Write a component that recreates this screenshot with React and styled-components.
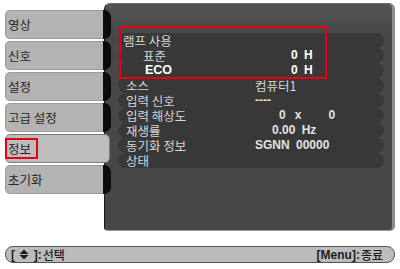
import React from 'react';
import styled, { createGlobalStyle } from 'styled-components';

const GlobalStyle = createGlobalStyle`
  html, body {
    margin: 0;
    padding: 0;
    background: #ffffff;
  }
  body {
    font-family: "Noto Sans CJK KR", "Liberation Sans", sans-serif;
  }
`;

const Page = styled.div`
  width: 400px;
  height: 269px;
  box-sizing: border-box;
  padding: 3px 5px 0 5px;
  display: flex;
  flex-direction: column;
`;

const Main = styled.div`
  display: flex;
  height: 228px;
`;

const TabColumn = styled.div`
  width: 106px;
  flex-shrink: 0;
  display: flex;
  flex-direction: column;
  gap: 2px;
  padding-top: 7px;
  position: relative;
  z-index: 1;
`;

const Tab = styled.div`
  height: 29px;
  display: flex;
  width: ${p => (p.$active ? '105px' : '106px')};
`;

const TabFace = styled.div`
  flex: 1;
  box-sizing: border-box;
  display: flex;
  align-items: center;
  padding-left: ${p => (p.$active ? '0' : '2px')};
  background: ${p => (p.$active ? '#bdbdbd' : '#b3b3b3')};
  border: 1px solid ${p => (p.$active ? '#7a7a7a' : '#9c9c9c')};
  border-right: ${p => (p.$active ? '1px solid #7a7a7a' : 'none')};
  border-radius: ${p => (p.$active ? '5px' : '5px 0 0 5px')};
  font-size: 12.5px;
  line-height: 15px;
  color: #262626;
`;

const TabEnd = styled.div`
  width: 8px;
  background: #0c0c0c;
  border-radius: 0 7px 7px 0;
`;

const Marked = styled.span`
  display: inline-block;
  margin-left: -1px;
  border: 2px solid #e60012;
  padding: 1px 5px 1px 1px;
`;

const Panel = styled.div`
  flex: 1;
  margin-left: -7px;
  box-sizing: border-box;
  padding: 29px 8px 0 13px;
  background: linear-gradient(#545454 0px, #484848 30px, #474747 100%);
  border-left: 1px solid #1a1a1a;
  border-right: 3px solid #8c8c8c;
  border-bottom: 1px solid #9a9a9a;
  border-top: 1px solid #6a6a6a;
  border-radius: 6px 6px 5px 4px;
`;

const InfoList = styled.div`
  display: flex;
  flex-direction: column;
`;

const Group = styled.div`
  position: relative;
  display: flex;
  flex-direction: column;
`;

const RedBox = styled.div`
  position: absolute;
  left: 1px;
  top: -7px;
  width: 208px;
  bottom: -1px;
  box-sizing: border-box;
  border: 2px solid #e60012;
  pointer-events: none;
`;

const Row = styled.div`
  height: 15px;
  display: grid;
  grid-template-columns: 137px 1fr;
  align-items: center;
  background: #383838;
  border-radius: 7.5px;
`;

const Label = styled.span`
  padding-left: ${p => p.$pad}px;
  font-size: ${p => (p.$latin ? '12.5px' : '12.5px')};
  font-family: ${p => (p.$latin ? '"Liberation Sans", sans-serif' : '"Noto Sans CJK KR", sans-serif')};
  font-weight: ${p => (p.$latin ? 700 : 400)};
  color: ${p => (p.$latin ? '#ffffff' : '#d6d6d6')};
  line-height: 15px;
  white-space: pre;
`;

const Value = styled.span`
  display: flex;
  padding-left: ${p => p.$indent || 0}px;
  font-family: "Liberation Sans", "Noto Sans CJK KR", sans-serif;
  font-weight: 700;
  font-size: 12px;
  color: ${p => (p.$bright ? '#ffffff' : '#e2e2e2')};
  line-height: 15px;
  white-space: pre;
  word-spacing: 3px;
`;

const Korean = styled.span`
  font-family: "Noto Sans CJK KR", sans-serif;
  font-weight: 400;
  font-size: 12.5px;
  color: #d6d6d6;
`;

const Gap = styled.span`
  margin-left: ${p => p.$w}px;
`;

const BottomBar = styled.div`
  margin-top: 15px;
  height: 17px;
  box-sizing: border-box;
  display: flex;
  justify-content: space-between;
  align-items: center;
  padding: 0 11px 0 5px;
  background: #bcbcbc;
  border: 1px solid #555555;
  border-radius: 8px;
  font-family: "Liberation Sans", "Noto Sans CJK KR", sans-serif;
  font-weight: 700;
  font-size: 12px;
  color: #1e1e1e;
`;

const Hint = styled.span`
  display: flex;
  align-items: center;
  gap: 1px;
  white-space: pre;
`;

const HintKo = styled.span`
  font-family: "Noto Sans CJK KR", sans-serif;
  font-weight: 500;
  font-size: 12px;
`;

const tabs = ['영상', '신호', '설정', '고급 설정', '정보', '초기화'];

function UpDown() {
  return (
    <svg width="10" height="11" viewBox="0 0 10 11">
      <polygon points="5,0.5 9.5,5 0.5,5" fill="#1e1e1e" />
      <polygon points="0.5,6 9.5,6 5,10.5" fill="#1e1e1e" />
    </svg>
  );
}

export default function App() {
  return (
    <>
      <GlobalStyle />
      <Page>
        <Main>
          <TabColumn>
            {tabs.map(t => {
              const active = t === '정보';
              return (
                <Tab key={t} $active={active}>
                  <TabFace $active={active}>
                    {active ? <Marked>{t}</Marked> : t}
                  </TabFace>
                  {!active && <TabEnd />}
                </Tab>
              );
            })}
          </TabColumn>
          <Panel>
            <InfoList>
              <Group>
                <Row>
                  <Label $pad={5}>램프 사용</Label>
                </Row>
                <Row>
                  <Label $pad={25}>표준</Label>
                  <Value $indent={36} $bright>0 H</Value>
                </Row>
                <Row>
                  <Label $pad={27} $latin>ECO</Label>
                  <Value $indent={36} $bright>0 H</Value>
                </Row>
                <RedBox />
              </Group>
              <Row>
                <Label $pad={8}>소스</Label>
                <Value><Korean>컴퓨터1</Korean></Value>
              </Row>
              <Row>
                <Label $pad={8}>입력 신호</Label>
                <Value>----</Value>
              </Row>
              <Row>
                <Label $pad={8}>입력 해상도</Label>
                <Value $indent={24}>
                  0<Gap $w={9}>x</Gap><Gap $w={27}>0</Gap>
                </Value>
              </Row>
              <Row>
                <Label $pad={8}>재생률</Label>
                <Value $indent={17}>0.00 Hz</Value>
              </Row>
              <Row>
                <Label $pad={8}>동기화 정보</Label>
                <Value>SGNN 00000</Value>
              </Row>
              <Row>
                <Label $pad={8}>상태</Label>
              </Row>
            </InfoList>
          </Panel>
        </Main>
        <BottomBar>
          <Hint>
            [ <UpDown /> ]:<HintKo>선택</HintKo>
          </Hint>
          <Hint>
            [Menu]:<HintKo>종료</HintKo>
          </Hint>
        </BottomBar>
      </Page>
    </>
  );
}
